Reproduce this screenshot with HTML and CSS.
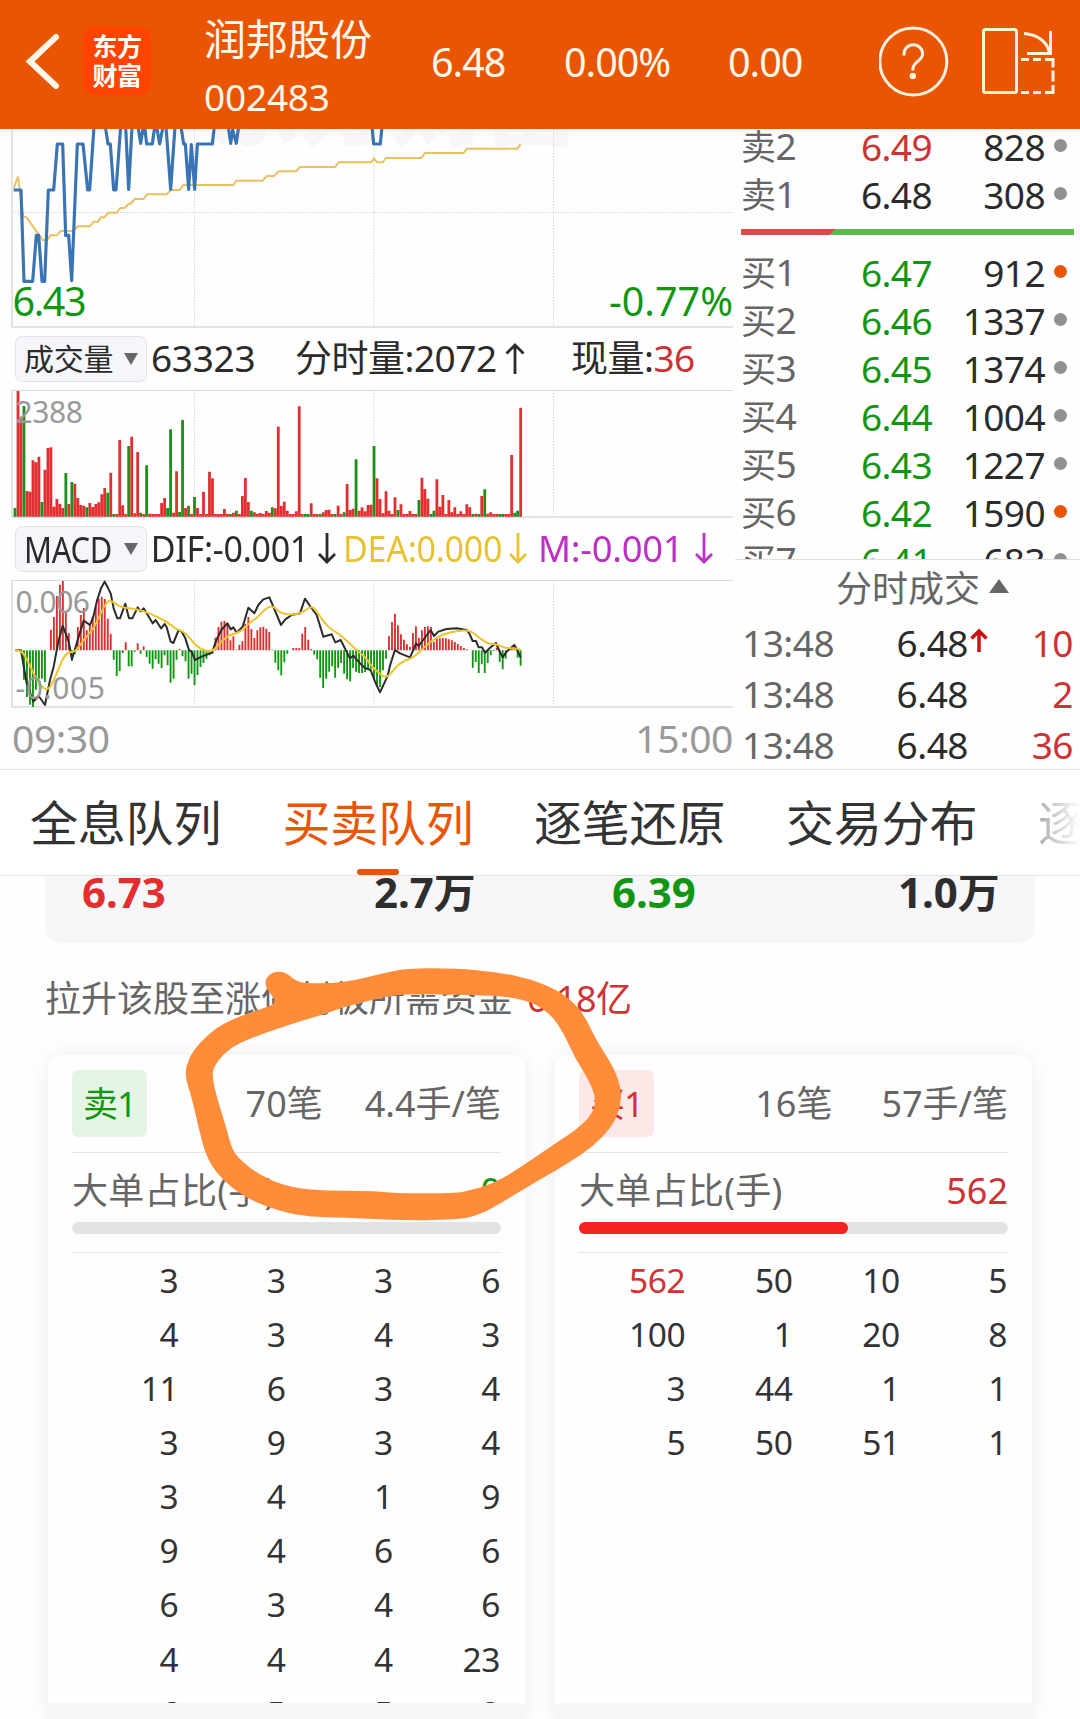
FILE: index.html
```html
<!DOCTYPE html>
<html lang="zh-CN">
<head>
<meta charset="utf-8">
<title>润邦股份 002483</title>
<link rel="stylesheet" href="styles.css">
</head>
<body>
<header class="header">
  <svg class="back" width="82" height="129" viewBox="0 0 82 129"><path d="M56 37L30 61.500L56 86"/></svg>
  <div class="logo"><span>东方</span><span>财富</span></div>
  <div class="stock"><span class="stock-name">润邦股份</span><span class="stock-code">002483</span></div>
  <span class="head-num">6.48</span>
  <span class="head-num">0.00%</span>
  <span class="head-num">0.00</span>
  <svg class="head-icon" width="103" height="129" viewBox="879 0 103 129">
    <circle cx="913.300" cy="61.500" r="33.500"/>
    <path d="M904 55.500v-1.500a9.300 9.300 0 0 1 18.600 0c0 7-9.800 7.500-9.800 15.500v1"/>
    <circle class="dot-fill" cx="912.800" cy="76" r="3.200"/>
  </svg>
  <svg class="head-icon" width="90" height="129" viewBox="982 0 90 129">
    <rect x="983.500" y="29.500" width="33" height="63" rx="2"/>
    <path d="M1024 33.500c14 1 24 9 25.500 20M1050.500 31v22.500H1027"/>
    <path d="M1021 59.500h8M1033 59.500h8M1045 59.500h8v8M1053 70.500v11M1053 85v7.500h-8M1041 92.500h-8M1029 92.500h-8"/>
  </svg>
</header>

<section class="market">
  <div class="charts">
    <svg width="740" height="199" viewBox="0 129 740 199">
      <text class="watermark" x="206" y="138" textLength="372">东方财富</text>
      <path class="frame" d="M12 129V327H733"/>
      <path class="grid" d="M12 212.500H733M194.500 129V326M374 129V326M553.500 129V326"/>
      <g transform="translate(0 120) scale(.33333)">
        <path class="avg" d="M41 205L54 170L70 290L80 292L118 346L128 360H141L152 346H171L182 333H220L233 319H270L281 305H294L303 292H313L325 278H350L361 264H374L386 251H392L404 237H430L441 223H500L512 210H539L550 195H700L709 182H788L800 168H822L836 154H888L900 141H1005L1016 127H1113L1122 116L1131 127H1148L1158 114H1264L1275 99H1391L1401 86H1552L1562 72"/>
        <path class="price" d="M41 210H63L72 484H98L109 346H116L126 484H134L145 210H161L172 72H188L197 346H206L215 482L232 72H249L263 210H269L282 20H316L324 72H331L341 210H348L362 20H377L386 208L396 20H414L422 70L430 20H434L440 72H457L464 20H470L479 72L489 20H498L512 208L525 20H543L551 72H556L566 208L574 74L584 208L592 72H637L643 20H685L692 70L698 30L709 70L716 20H1116L1121 72H1141L1146 20"/>
      </g>
      <text class="edge" x="12.500" y="315.500" textLength="74">6.43</text>
      <text class="edge" x="609" y="315.500" textLength="124">-0.77%</text>
    </svg>
    <div class="bar bar-volume">
      <div class="select"><span>成交量</span><i class="tri-down"></i></div>
      <span class="pad">63323</span>
      <span class="nudge">分时量:2072</span>
      <svg class="arrow" width="20" height="34" viewBox="0 0 20 34"><path d="M10 32V3M1.500 11.500L10 3L18.500 11.500"/></svg>
      <span class="nudge">现量:<b class="red">36</b></span>
    </div>
    <svg width="740" height="130" viewBox="0 389 740 130">
      <path class="frame" d="M12 390V517H733"/>
      <path class="frame thin" d="M12 390.500H733"/>
      <path class="grid" d="M194.500 390V517M374 390V517M553.500 390V517"/>
      <g id="volume" transform="translate(0 380) scale(.33333)"></g>
      <text class="scale" x="15.500" y="423">2388</text>
    </svg>
    <div class="bar bar-macd">
      <div class="select"><span class="latin">MACD</span><i class="tri-down"></i></div>
      <span class="pad narrow">DIF:-0.001</span>
      <svg class="arrow" width="18" height="34" viewBox="0 0 18 34"><path d="M9 2V31M1 23L9 31L17 23"/></svg>
      <span class="narrow dea">DEA:0.000</span>
      <svg class="arrow dea" width="18" height="34" viewBox="0 0 18 34"><path d="M9 2V31M1 23L9 31L17 23"/></svg>
      <span class="narrow wide m">M:-0.001</span>
      <svg class="arrow m" width="18" height="34" viewBox="0 0 18 34"><path d="M9 2V31M1 23L9 31L17 23"/></svg>
    </div>
    <svg width="740" height="130" viewBox="0 579 740 130">
      <path class="frame" d="M12 580V707H733"/>
      <path class="frame thin" d="M12 580.500H733"/>
      <path class="grid" d="M194.500 580V707M374 580V707M553.500 580V707"/>
      <g id="macd" transform="translate(0 570) scale(.33333)"></g>
      <text class="scale" x="15.500" y="613" textLength="74">0.006</text>
      <text class="scale" x="15.500" y="699" textLength="89">-0.005</text>
    </svg>
    <div class="axis"><span>09:30</span><span>15:00</span></div>
  </div>

  <div class="side">
    <div class="book">
      <div class="row"><span class="lv">卖<em>2</em></span><span class="pr red">6.49</span><span class="qt">828</span><i class="dot"></i></div>
      <div class="row"><span class="lv">卖<em>1</em></span><span class="pr">6.48</span><span class="qt">308</span><i class="dot"></i></div>
      <svg class="ratio" width="333" height="6" viewBox="0 0 333 6"><path fill="#5db84c" d="M90 0H333V6H90z"/><path fill="#dc4a4a" d="M0 0H94.500L89 6H0z"/></svg>
      <div class="row"><span class="lv">买<em>1</em></span><span class="pr green">6.47</span><span class="qt">912</span><i class="dot hot"></i></div>
      <div class="row"><span class="lv">买<em>2</em></span><span class="pr green">6.46</span><span class="qt">1337</span><i class="dot"></i></div>
      <div class="row"><span class="lv">买<em>3</em></span><span class="pr green">6.45</span><span class="qt">1374</span><i class="dot"></i></div>
      <div class="row"><span class="lv">买<em>4</em></span><span class="pr green">6.44</span><span class="qt">1004</span><i class="dot"></i></div>
      <div class="row"><span class="lv">买<em>5</em></span><span class="pr green">6.43</span><span class="qt">1227</span><i class="dot"></i></div>
      <div class="row"><span class="lv">买<em>6</em></span><span class="pr green">6.42</span><span class="qt">1590</span><i class="dot hot"></i></div>
      <div class="row"><span class="lv">买<em>7</em></span><span class="pr green">6.41</span><span class="qt">683</span><i class="dot"></i></div>
    </div>
    <div class="ticks">
      <div class="ticks-title">分时成交<i class="tri-up"></i></div>
      <div class="tick"><span class="tm">13:48</span><span class="tp">6.48</span><svg class="arrow up" width="18" height="26" viewBox="0 0 18 26"><path d="M9 24V3M1.500 10.500L9 3L16.500 10.500"/></svg><span class="tq">10</span></div>
      <div class="tick"><span class="tm">13:48</span><span class="tp">6.48</span><i></i><span class="tq">2</span></div>
      <div class="tick"><span class="tm">13:48</span><span class="tp">6.48</span><i></i><span class="tq">36</span></div>
    </div>
  </div>
</section>

<nav class="tabs">
  <span>全息队列</span><span class="active">买卖队列</span><span>逐笔还原</span><span>交易分布</span><span class="fade">逐笔</span>
</nav>

<main class="body">
  <div class="summary"><span class="red2">6.73</span><span>2.7万</span><span class="green">6.39</span><span>1.0万</span></div>
  <p class="note">拉升该股至涨停封板所需资金<b class="red">6.18亿</b></p>
  <div class="cards">
    <section class="card">
      <div class="card-head"><span class="badge sell">卖1</span><span class="cnt">70笔</span><span class="avgq">4.4手/笔</span></div>
      <div class="big"><span>大单占比(手)</span><b class="green">0</b></div>
      <div class="progress"></div>
      <div class="queue">
        <span>3</span><span>3</span><span>3</span><span>6</span>
        <span>4</span><span>3</span><span>4</span><span>3</span>
        <span>11</span><span>6</span><span>3</span><span>4</span>
        <span>3</span><span>9</span><span>3</span><span>4</span>
        <span>3</span><span>4</span><span>1</span><span>9</span>
        <span>9</span><span>4</span><span>6</span><span>6</span>
        <span>6</span><span>3</span><span>4</span><span>6</span>
        <span>4</span><span>4</span><span>4</span><span>23</span>
        <span>6</span><span>5</span><span>5</span><span>3</span>
      </div>
      <div class="card-foot"></div>
    </section>
    <section class="card">
      <div class="card-head"><span class="badge buy">买1</span><span class="cnt">16笔</span><span class="avgq">57手/笔</span></div>
      <div class="big"><span>大单占比(手)</span><b class="red">562</b></div>
      <div class="progress"><i style="width:62.7%"></i></div>
      <div class="queue">
        <span class="red">562</span><span>50</span><span>10</span><span>5</span>
        <span>100</span><span>1</span><span>20</span><span>8</span>
        <span>3</span><span>44</span><span>1</span><span>1</span>
        <span>5</span><span>50</span><span>51</span><span>1</span>
      </div>
      <div class="card-foot"></div>
    </section>
  </div>
</main>
<svg class="marker" width="480" height="270" viewBox="170 960 480 270"><path id="loop" transform="translate(0 860) scale(.41459 .33333)"/></svg>
<script src="chart.js"></script>
</body>
</html>
```
FILE: styles.css
```css
* { box-sizing: border-box; }
body {
  margin: 0; width: 1080px; height: 1719px; overflow: hidden; position: relative;
  background: #fefefe; color: #2b2b2b;
  font-family: "Noto Sans", "Noto Sans CJK SC", sans-serif; font-size: 37px;
  display: flex; flex-direction: column;
}
b { font-weight: 400; }
em, i { font-style: normal; }
svg { display: block; flex: none; }
span { white-space: nowrap; }
.red { color: #cf3232; }
.red2 { color: #e42d2d; }
.green { color: #109610; }

.header {
  flex: none; height: 129px; background: #ea5504; color: #fff8ea;
  display: grid; grid-template-columns: 82px 123px 226px 133px 164px 151px 103px 90px;
}
.back path { fill: none; stroke: #fff8ea; stroke-width: 6; stroke-linecap: round; }
.logo {
  width: 68px; height: 68px; margin: 27px 0 0 1px; padding-bottom: 3px; border-radius: 12px; background: #ff4300; color: #fff;
  display: flex; flex-direction: column; align-items: center; justify-content: center;
  font: 700 25px/29px "Noto Sans CJK SC", sans-serif; letter-spacing: -.5px;
}
.stock { display: flex; flex-direction: column; padding-top: 9px; }
.stock-name { font-size: 42px; line-height: 59px; margin-left: -1px; }
.stock-code { font-size: 37px; line-height: 58px; letter-spacing: -.2px; margin-left: -1px; }
.head-num { font-size: 39.500px; line-height: 125px; letter-spacing: -1px; }
.head-icon circle, .head-icon path, .head-icon rect { fill: none; stroke: #fff3df; stroke-width: 3; }
.head-icon .dot-fill { fill: #fff3df; stroke: none; }

.market { flex: none; display: flex; height: 640px; }
.charts { width: 740px; display: flex; flex-direction: column; }
.frame { fill: none; stroke: #dadada; stroke-width: 1.500; }
.thin { stroke-width: 1; }
.grid { fill: none; stroke: #d6d6d6; stroke-dasharray: 1.500 1.500; }
.avg { fill: none; stroke: #eac160; stroke-width: 6; }
.price { fill: none; stroke: #3b74b4; stroke-width: 9.500; stroke-linejoin: round; }
.watermark { font: 900 94px "Noto Sans CJK SC", sans-serif; fill: #f7f7f7; }
.edge { font-size: 39.500px; fill: #109610; }
.scale { font-size: 30px; fill: #999; letter-spacing: -.4px; }
.bar { display: grid; align-items: center; padding-left: 15px; line-height: 58px; letter-spacing: -.3px; }
.bar-volume { height: 61px; grid-template-columns: 132px 150px 208px 68px auto; }
.bar-macd { height: 60px; grid-template-columns: 132px 171px 25px 166px 29px 157px auto; }
.bar > span { height: 60px; }
.pad { padding-left: 4px; }
.nudge { margin-left: -2px; letter-spacing: -.5px; }
.select {
  height: 46px; border: 1px solid #e2e3e6; border-radius: 7px; background: #f5f6fa;
  display: flex; align-items: center; padding: 0 8px; font-size: 30px; line-height: 42px; justify-content: space-between;
}
.tri-down { border: 7.500px solid transparent; border-top: 12px solid #666; border-bottom: 0; }
.tri-up { border: 10px solid transparent; border-bottom: 14px solid #666; border-top: 0; margin: -6px 0 0 9px; }
.latin { font-size: 35.500px; transform: scaleX(.87); transform-origin: left; margin-right: -16px; }
.narrow { transform: scaleX(.92); transform-origin: left; line-height: 57px; }
.wide { transform: scaleX(.985); }
.arrow path { fill: none; stroke: currentColor; stroke-width: 2.800; }
.bar-macd .arrow { margin-top: -3px; }
.dea { color: #e8c22f; }
.m { color: #bf2fc4; }
.axis { height: 60px; width: 733px; display: flex; justify-content: space-between; padding-left: 12px; color: #999; font-size: 39px; line-height: 57px; letter-spacing: -.4px; }

.side { width: 340px; }
.book { height: 430px; overflow: hidden; }
.book .row:first-child { margin-top: -7px; }
.row { height: 48px; line-height: 47px; display: grid; grid-template-columns: 80px 111px 113px 17px 13px; align-items: center; padding-left: 1px; letter-spacing: -.6px; }
.lv { color: #666; font-size: 35px; }
.lv em { font-size: 37px; }
.pr, .qt { text-align: right; }
.dot { grid-column: 5; margin-left: -8px; width: 13px; height: 13px; border-radius: 50%; background: #8f8f94; position: relative; top: -1px; }
.hot { background: #ea5504; }
.ratio { margin: 11px 0 13px 1px; }
.ticks { border-top: 1px solid #dedede; margin-left: -5px; padding-left: 7px; letter-spacing: -.5px; }
.ticks-title { height: 57px; line-height: 55px; display: flex; align-items: center; padding-left: 94px; font-size: 36px; color: #666; letter-spacing: 0; }
.tick { height: 51px; line-height: 50px; display: grid; grid-template-columns: 110px 116px 30px 75px; align-items: center; }
.tm { color: #666; }
.tp, .tq { text-align: right; }
.tq { color: #cf3232; }
.up { margin: -4px 0 0 2px; color: #d01010; }
.up path { stroke-width: 3.500; }

.tabs {
  flex: none; height: 107px; border-top: 1px solid #e2e2e2; border-bottom: 1px solid #e2e2e2; background: #fff;
  display: flex; gap: 60px; padding-left: 30px; overflow: hidden; font-size: 48px; line-height: 106px; color: #333;
}
.tabs span { height: 105px; letter-spacing: -.2px; width: 192px; flex: none; }
.tabs .active { color: #ea5504; display: flex; flex-direction: column; align-items: center; line-height: 106px; }
.tabs .active::after { content: ""; width: 42px; height: 6px; border-radius: 3px; background: #ea5504; margin-top: -7px; }
.tabs .fade { background: linear-gradient(90deg, #aaa, #fff 42px); background-clip: text; -webkit-background-clip: text; color: transparent; }

.body { flex: none; height: 843px; overflow: hidden; }
.summary {
  height: 67px; margin: 0 45px; border-radius: 0 0 16px 16px; background: #f7f7fa; color: #2e2e2e;
  display: grid; grid-template-columns: 292px 238px 286px auto; padding-left: 37px;
  font-size: 42px; font-weight: 700; line-height: 31px;
}
.note { margin: 28px 0 0 45px; font-size: 36px; line-height: 56px; color: #666; height: 56px; }
.note b { margin-left: 14px; letter-spacing: -.6px; }
.cards { display: flex; gap: 30px; padding-left: 48px; margin-top: 28px; }
.card {
  width: 477px; height: 670px; padding: 15px 24px 0; border-radius: 12px; background: #fefefe;
  box-shadow: 0 0 22px rgba(0, 0, 0, .07); overflow: hidden; color: #666;
}
.card-head { height: 83px; border-bottom: 1px solid #e4e4e4; display: flex; line-height: 68px; font-size: 36px; letter-spacing: 0; }
.badge { width: 75px; height: 67px; border-radius: 6px; text-align: center; font-size: 35px; letter-spacing: -1px; }
.sell { background: #e4f5e6; color: #109610; }
.buy { background: #fde8e8; color: #cf3232; }
.cnt { margin-left: auto; }
.avgq { margin-left: 42px; }
.buy ~ .avgq { margin-left: 49px; }
.big { display: flex; justify-content: space-between; font-size: 36px; line-height: 69px; padding-top: 3px; height: 69px; }
.big span { letter-spacing: .3px; }
.progress { height: 12px; border-radius: 6px; background: #e3e3e3; }
.progress i { display: block; height: 12px; border-radius: 6px; background: #f42222; }
.queue {
  height: 451px; margin: 18px 1px 0 -1px; overflow: hidden; border-top: 1px solid #e4e4e4;
  display: grid; grid-template-columns: repeat(4, 1fr); grid-auto-rows: 54.080px;
  text-align: right; font-size: 33.500px; line-height: 55px; color: #333; letter-spacing: -.4px;
}
.card-foot { height: 20px; margin: 0 -24px; background: #f7f7fa; }
.marker { position: absolute; left: 170px; top: 960px; }
.marker path { fill: #ff8c38; fill-rule: evenodd; }
```
FILE: chart.js
```js
// Bars are listed one per minute; coordinates are in thirds of a pixel.
const STEP = 8.976, START = 45;
const x = k => START + k * STEP;

function add(group, cls, d) {
  const p = document.createElementNS('http://www.w3.org/2000/svg', 'path');
  p.setAttribute('d', d);
  p.setAttribute('style', cls);
  group.appendChild(p);
}

// Volume: a leading "g" marks a falling minute.
const volume = 'g26 377 300 g332 77 75 169 163 180 g44 141 206 208 30 53 38 26 g131 38 g104 99 56 35 33 g28 41 29 38 43 67 86 g72 132 g8 8 230 34 8 g212 240 10 194 g12 8 g154 9 8 8 8 41 56 g26 g262 12 136 g14 g290 26 g33 8 g59 26 8 75 8 135 115 8 8 8 23 8 g8 12 g18 8 62 116 44 g18 13 9 11 8 17 12 g28 25 270 32 45 18 8 8 16 331 8 g8 g8 40 8 8 g8 13 20 21 8 g8 33 8 g13 98 20 24 g172 18 28 16 35 36 g212 115 53 10 76 18 8 58 g20 37 8 8 17 8 8 g50 117 83 54 g8 g18 112 30 65 8 50 13 28 8 16 8 37 28 g8 9 g8 62 g82 9 13 8 8 g8 g8 8 8 185 g12 g18 327'.split(' ');
let up = '', down = '';
volume.forEach((v, k) => {
  const g = v[0] === 'g', h = +(g ? v.slice(1) : v);
  const r = `M${x(k) - 4.2} 410v${-h}h8.4v${h}z`;
  if (g) down += r; else up += r;
});
const vol = document.getElementById('volume');
add(vol, 'fill:#e23030', up);
add(vol, 'fill:#1c8f1c', down);

// MACD histogram around its zero line.
const hist = [0,0,-5,-88,-140,-163,-170,-118,-85,-85,-95,0,62,100,163,197,208,112,52,-32,-12,70,106,127,60,75,100,130,155,161,154,95,50,-28,-77,-62,-8,24,-48,-48,-4,21,-10,12,-20,-40,-55,-27,-40,-53,-15,-45,-97,-85,-28,4,-18,-33,-85,-70,-104,-74,-50,-38,-25,-15,-10,38,70,86,88,82,30,42,2,17,27,80,100,64,37,60,69,71,65,55,2,-37,-60,-75,-36,-10,0,7,7,7,50,70,32,4,-13,-27,-82,-113,-85,-64,-48,-82,-52,-38,-70,-87,-93,-53,-64,-68,-68,-65,-55,-55,-85,-105,-110,-60,-25,43,85,110,75,48,32,18,10,52,72,38,60,70,72,70,26,35,36,37,36,33,30,25,19,13,7,3,0,-52,-35,-68,-42,-68,-38,-15,-2,8,-35,-57,-25,4,8,10,-22,-46];
up = ''; down = '';
hist.forEach((v, k) => {
  const r = `M${x(k) - 2.8} 241v${-v}h5.6v${v}z`;
  if (v < 0) down += r; else up += r;
});
const macd = document.getElementById('macd');
add(macd, 'fill:#d93030', up);
add(macd, 'fill:#109610', down);

const pts = s => s.split(' ').map(p => p.split(',').map(Number));
function smooth(p, closed) {
  const mid = (a, b) => [(a[0] + b[0]) / 2, (a[1] + b[1]) / 2];
  if (closed) {
    const m = mid(p[p.length - 1], p[0]);
    return 'M' + m + p.map((a, i) => 'Q' + a + ' ' + mid(a, p[(i + 1) % p.length])).join('') + 'Z';
  }
  let d = 'M' + p[0];
  for (let i = 1; i < p.length - 1; i++) d += 'Q' + p[i] + ' ' + mid(p[i], p[i + 1]);
  return d + 'L' + p[p.length - 1];
}
const line = 'fill:none;stroke-width:6;stroke-linejoin:round;stroke:';
add(macd, line + '#2c2c2c', 'M' + pts('45,241 63,241 80,340 100,395 116,378 135,405 150,330 161,290 175,215 188,167 206,215 216,268 233,210 251,152 270,165 280,140 291,92 303,55 314,35 323,52 332,70 341,115 352,145 360,145 376,101 387,145 397,145 413,112 422,124 431,115 449,145 458,160 467,150 483,175 494,162 500,172 512,215 520,219 536,180 545,185 556,205 567,240 575,245 585,270 605,260 636,248 650,208 664,180 682,160 692,178 700,172 710,188 728,170 745,113 763,130 775,105 790,88 808,82 820,110 843,165 856,148 875,135 900,130 915,86 930,108 950,135 970,200 995,193 1006,217 1022,210 1050,265 1060,257 1080,280 1095,294 1112,300 1125,335 1140,367 1155,335 1162,320 1172,280 1185,240 1200,250 1230,262 1240,240 1248,220 1256,228 1292,180 1302,198 1315,185 1340,177 1370,175 1400,180 1408,190 1418,213 1428,213 1436,232 1446,232 1455,248 1472,232 1488,219 1497,240 1508,262 1520,245 1543,225 1552,240 1562,263').join('L'));
add(macd, line + '#ecc42c', smooth(pts('45,241 63,241 80,265 100,310 120,345 140,362 155,345 170,310 190,262 207,245 228,245 250,210 280,178 300,135 320,95 335,91 360,112 413,118 450,130 480,145 505,158 530,180 550,183 570,205 590,230 615,242 638,245 660,218 690,193 725,185 745,160 770,145 800,112 820,108 840,128 865,135 905,130 930,110 945,115 970,155 995,180 1015,190 1040,212 1075,245 1095,260 1115,290 1140,312 1158,324 1175,308 1195,283 1215,272 1240,262 1265,240 1290,215 1330,192 1370,183 1410,180 1440,205 1465,222 1490,222 1515,235 1550,235 1562,240')));

// Hand-drawn marker loop: outer and inner outline.
document.getElementById('loop').setAttribute('d',
  smooth(pts('640,378 641,355 655,338 675,334 692,340 708,358 730,370 800,370 860,360 915,342 980,325 1100,325 1200,336 1280,357 1350,393 1402,448 1440,545 1480,620 1499,690 1496,745 1476,800 1430,860 1370,910 1300,960 1220,1020 1160,1064 1100,1080 950,1081 830,1072 750,1071 680,1056 600,1019 540,965 500,900 480,810 462,710 448,660 448,620 464,575 500,525 545,485 610,455 670,430 652,402'), true) +
  smooth(pts('513,660 513,625 540,580 575,550 640,518 720,485 790,460 820,445 880,425 930,410 985,402 1140,405 1230,410 1290,430 1330,465 1360,520 1385,590 1420,660 1438,715 1430,760 1395,805 1340,850 1270,910 1200,965 1140,990 1095,1000 950,1000 900,992 755,992 680,975 620,940 580,900 560,870 545,800 525,720'), true));
```
